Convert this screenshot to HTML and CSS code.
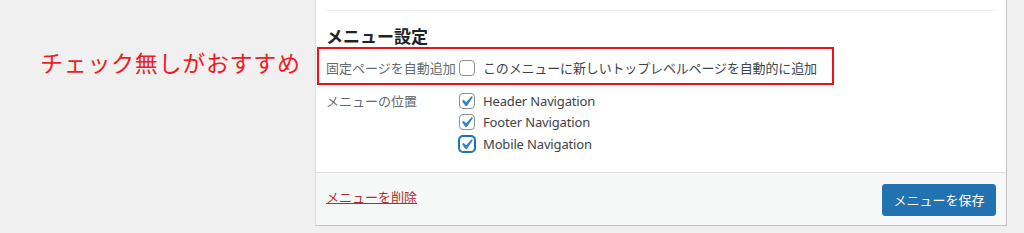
FILE: index.html
```html
<!DOCTYPE html>
<html lang="ja">
<head>
<meta charset="utf-8">
<title>メニュー設定</title>
<link rel="stylesheet" href="styles.css">
</head>
<body>
<div class="page">
  <div class="note">チェック無しがおすすめ</div>
  <div class="panel">
    <div class="panel-body">
      <div class="topline"></div>
      <h3 class="title">メニュー設定</h3>
      <div class="row highlight">
        <div class="label">固定ページを自動追加</div>
        <div class="opt"><span class="cb"></span><span class="ja">このメニューに新しいトップレベルページを自動的に追加</span></div>
      </div>
      <div class="row locs">
        <div class="label">メニューの位置</div>
        <div class="opts">
          <div class="opt"><span class="cb"><svg class="check" viewBox="0 0 20 20"><path d="M14.83 4.89l1.34.94-5.81 8.38H9.02L5.78 9.67l1.34-1.25 2.57 2.4z"/></svg></span><span class="en">Header Navigation</span></div>
          <div class="opt"><span class="cb"><svg class="check" viewBox="0 0 20 20"><path d="M14.83 4.89l1.34.94-5.81 8.38H9.02L5.78 9.67l1.34-1.25 2.57 2.4z"/></svg></span><span class="en">Footer Navigation</span></div>
          <div class="opt"><span class="cb focus"><svg class="check" viewBox="0 0 20 20"><path d="M14.83 4.89l1.34.94-5.81 8.38H9.02L5.78 9.67l1.34-1.25 2.57 2.4z"/></svg></span><span class="en">Mobile Navigation</span></div>
        </div>
      </div>
    </div>
    <div class="panel-foot">
      <a class="delete" href="#">メニューを削除</a>
      <button class="save" type="button">メニューを保存</button>
    </div>
  </div>
</div>
</body>
</html>
```

FILE: styles.css
```css
html, body {
  margin: 0;
  padding: 0;
  background: #f0f0f1;
}
body {
  font-family: "Noto Sans", "Noto Sans CJK JP", sans-serif;
  font-size: 13px;
  color: #3c434a;
}
.page {
  display: flex;
  height: 233px;
  overflow: hidden;
}
.note {
  width: 315px;
  flex: none;
  box-sizing: border-box;
  padding: 46px 0 0 40px;
  font-family: "Noto Sans CJK JP", sans-serif;
  font-size: 23px;
  line-height: 32px;
  letter-spacing: 0.7px;
  color: #ee1c25;
}
.panel {
  width: 692px;
  height: 226px;
  flex: none;
  box-sizing: border-box;
  background: #fff;
  border-left: 1px solid #dcdcde;
  border-right: 1px solid #c3c4c7;
  border-bottom: 1px solid #c3c4c7;
  display: flex;
  flex-direction: column;
}
.panel-body {
  flex: 1;
  padding: 0 10px;
}
.topline {
  height: 10px;
  border-bottom: 1px solid #f0f0f1;
}
.title {
  margin: 15px 0 1px;
  font-family: "Noto Sans CJK JP", sans-serif;
  font-size: 17px;
  line-height: 20px;
  font-weight: 700;
  color: #1d2327;
}
.row {
  display: flex;
}
.highlight {
  width: 517px;
  height: 38px;
  box-sizing: border-box;
  margin-left: -9px;
  padding: 3px 0 0 7px;
  border: 2px solid #ee1118;
  align-items: center;
}
.label {
  width: 133px;
  flex: none;
  font-family: "Noto Sans CJK JP", sans-serif;
  color: #646970;
  line-height: 21.5px;
}
.locs {
  padding-top: 5px;
  align-items: flex-start;
}
.opts {
  display: flex;
  flex-direction: column;
}
.opt {
  display: flex;
  align-items: center;
  height: 21.5px;
  color: #3c434a;
}
.cb {
  width: 16px;
  height: 16px;
  flex: none;
  box-sizing: border-box;
  border: 1px solid #8c8f94;
  border-radius: 4px;
  background: #fff;
  margin-right: 8px;
  overflow: visible;
}
.cb.focus {
  border-color: #2271b1;
  box-shadow: 0 0 0 1px #2271b1;
}
.check {
  display: block;
  width: 21px;
  height: 21px;
  margin: -3px 0 0 -4px;
  fill: #3582c4;
}
.ja {
  font-family: "Noto Sans CJK JP", sans-serif;
  letter-spacing: -0.15px;
}
.en {
  font-family: "Noto Sans", sans-serif;
  font-size: 13px;
  letter-spacing: -0.15px;
}
.panel-foot {
  height: 52px;
  border-top: 1px solid #dcdcde;
  background: #f6f7f7;
  padding: 0 10px;
  display: flex;
  align-items: center;
  justify-content: space-between;
}
.delete {
  font-family: "Noto Sans CJK JP", sans-serif;
  color: #b32d2e;
  text-decoration: underline;
  line-height: 20px;
  margin-bottom: 4px;
}
.save {
  width: 114px;
  height: 32px;
  margin-top: 1px;
  border: 1px solid #2271b1;
  border-radius: 3px;
  background: #2271b1;
  color: #fff;
  font-family: "Noto Sans CJK JP", sans-serif;
  font-size: 13px;
  padding: 0;
}
```
